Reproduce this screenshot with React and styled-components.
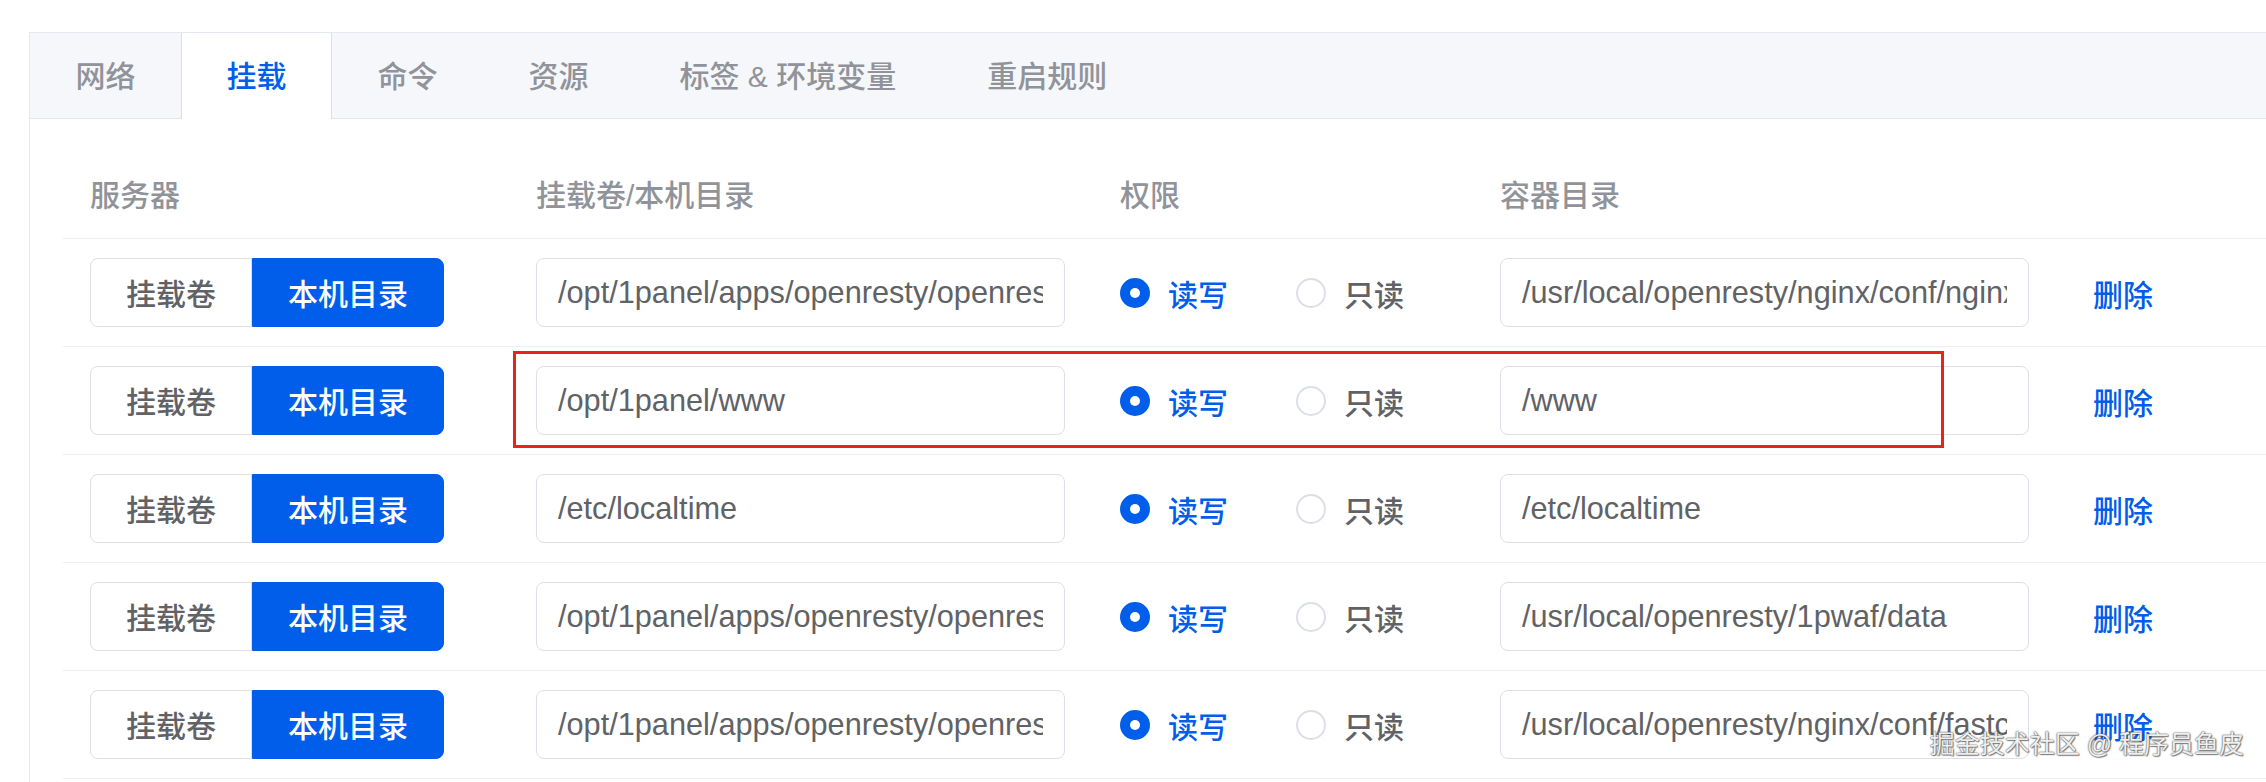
import styled, { createGlobalStyle } from "styled-components";

const GlobalStyle = createGlobalStyle`
  html, body {
    margin: 0;
    padding: 0;
    background: #ffffff;
    overflow: hidden;
  }
  body {
    font-family: "Liberation Sans", "Noto Sans CJK SC", sans-serif;
  }
  * {
    box-sizing: border-box;
  }
`;

const tabs = ["网络", "挂载", "命令", "资源", "标签 & 环境变量", "重启规则"];

const mounts = [
  {
    host: "/opt/1panel/apps/openresty/openresty/conf/nginx.conf",
    container: "/usr/local/openresty/nginx/conf/nginx.conf",
  },
  { host: "/opt/1panel/www", container: "/www", marked: true },
  { host: "/etc/localtime", container: "/etc/localtime" },
  {
    host: "/opt/1panel/apps/openresty/openresty/1pwaf/data",
    container: "/usr/local/openresty/1pwaf/data",
  },
  {
    host: "/opt/1panel/apps/openresty/openresty/conf/fastcgi_params",
    container: "/usr/local/openresty/nginx/conf/fastcgi_params",
  },
];

const App = () => {
  return (
    <Page>
      <GlobalStyle />
      <Card>
        <TabBar>
          {tabs.map((t) => (
            <Tab key={t} active={t === "挂载"}>
              {t}
            </Tab>
          ))}
        </TabBar>
        <Content>
          <HeaderRow>
            <HeadCell>服务器</HeadCell>
            <HeadCell>挂载卷/本机目录</HeadCell>
            <HeadCell>权限</HeadCell>
            <HeadCell>容器目录</HeadCell>
            <HeadCell />
          </HeaderRow>
          {mounts.map((m, i) => (
            <Row key={i}>
              <Cell>
                <Segmented>
                  <SegButton>挂载卷</SegButton>
                  <SegButton active>本机目录</SegButton>
                </Segmented>
              </Cell>
              <Cell>
                <PathInput readOnly value={m.host} />
              </Cell>
              <Cell>
                <RadioLabel checked>
                  <RadioDot checked />
                  <span>读写</span>
                </RadioLabel>
                <RadioLabel>
                  <RadioDot />
                  <span>只读</span>
                </RadioLabel>
              </Cell>
              <Cell>
                <PathInput readOnly value={m.container} />
              </Cell>
              <Cell>
                <LinkButton>删除</LinkButton>
              </Cell>
              {m.marked && <Highlight />}
            </Row>
          ))}
        </Content>
      </Card>
      <Watermark>掘金技术社区 @ 程序员鱼皮</Watermark>
    </Page>
  );
};

export default App;

const Page = styled.div`
  position: relative;
  width: 2266px;
  height: 782px;
  overflow: hidden;
  padding: 32px 0 0 29px;
`;

const Card = styled.div`
  width: 2270px;
  border: 1px solid #e4e7ed;
  background: #fff;
`;

const TabBar = styled.div`
  display: flex;
  height: 86px;
  background: #f5f7fa;
  border-bottom: 1px solid #e4e7ed;
`;

const Tab = styled.div`
  display: flex;
  align-items: center;
  height: 86px;
  padding: 0 44.5px 5px;
  font-size: 30px;
  font-weight: 500;
  color: ${({ active }) => (active ? "#005eeb" : "#909399")};
  background: ${({ active }) => (active ? "#ffffff" : "transparent")};
  border-left: 1px solid ${({ active }) => (active ? "#dcdfe6" : "transparent")};
  border-right: 1px solid ${({ active }) => (active ? "#dcdfe6" : "transparent")};
  white-space: pre;
`;

const Content = styled.div`
  padding: 32px 0 32px 33px;
`;

const columns = "446px 584px 380px 593px 1fr";

const HeaderRow = styled.div`
  display: grid;
  grid-template-columns: ${columns};
  height: 88px;
  align-items: center;
  border-bottom: 1px solid #ebeef5;
`;

const HeadCell = styled.div`
  padding: 0 27px 3px;
  font-size: 30px;
  font-weight: 500;
  color: #909399;
  white-space: nowrap;
`;

const Row = styled.div`
  position: relative;
  display: grid;
  grid-template-columns: ${columns};
  height: 108px;
  align-items: center;
  border-bottom: 1px solid #ebeef5;
`;

const Cell = styled.div`
  display: flex;
  align-items: center;
  padding: 0 27px;
  white-space: nowrap;
`;

const Segmented = styled.div`
  display: flex;
  height: 69px;
`;

const SegButton = styled.div`
  display: flex;
  align-items: center;
  padding: 0 35px 2px;
  font-size: 30px;
  font-weight: 500;
  color: ${({ active }) => (active ? "#ffffff" : "#606266")};
  background: ${({ active }) => (active ? "#005eeb" : "#ffffff")};
  border: 1px solid ${({ active }) => (active ? "#005eeb" : "#dcdfe6")};
  border-radius: ${({ active }) => (active ? "0 8px 8px 0" : "8px 0 0 8px")};
`;

const PathInput = styled.input`
  width: 529px;
  height: 69px;
  padding: 0 21px;
  border: 1px solid #dcdfe6;
  border-radius: 8px;
  font-family: "Liberation Sans", "Noto Sans CJK SC", sans-serif;
  font-size: 30.7px;
  color: #606266;
  background: #fff;
  outline: none;
`;

const RadioLabel = styled.label`
  display: flex;
  flex-shrink: 0;
  align-items: center;
  gap: 18px;
  margin-right: 68px;
  font-size: 30px;
  font-weight: 500;
  white-space: nowrap;
  color: ${({ checked }) => (checked ? "#005eeb" : "#606266")};
`;

const RadioDot = styled.span`
  position: relative;
  flex-shrink: 0;
  width: 30px;
  height: 30px;
  border-radius: 50%;
  border: ${({ checked }) => (checked ? "none" : "2px solid #dcdfe6")};
  background: ${({ checked }) => (checked ? "#005eeb" : "#fff")};

  &::after {
    content: "";
    display: ${({ checked }) => (checked ? "block" : "none")};
    position: absolute;
    left: 10px;
    top: 10px;
    width: 10px;
    height: 10px;
    border-radius: 50%;
    background: #fff;
  }
`;

const LinkButton = styled.span`
  font-size: 30px;
  font-weight: 500;
  color: #005eeb;
  cursor: pointer;
`;

const Highlight = styled.div`
  position: absolute;
  left: 450px;
  top: 4px;
  width: 1431px;
  height: 97px;
  border: 3px solid #e8231c;
  pointer-events: none;
`;

const Watermark = styled.div`
  position: absolute;
  right: 22px;
  bottom: 22px;
  font-size: 25px;
  color: rgba(255, 255, 255, 0.92);
  text-shadow: 0 0 1px #555, 0 0 2px #666, 1px 1px 1px rgba(0, 0, 0, 0.45);
  white-space: pre;
`;
